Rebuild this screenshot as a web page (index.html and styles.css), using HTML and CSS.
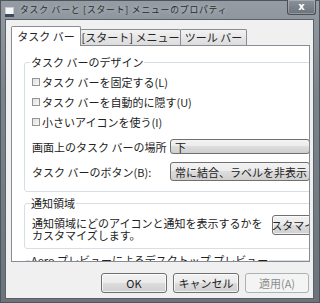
FILE: index.html
```html
<!DOCTYPE html>
<html lang="ja">
  <head>
    <meta charset="UTF-8" />
    <title>タスク バーと [スタート] メニューのプロパティ</title>
    <link rel="stylesheet" href="styles.css">
  </head>
  <body>
    <div class="window">
      <div class="titlebar">
        <svg class="app-icon" width="9" height="10" viewBox="0 0 9 10">
          <rect x="0.5" y="0.5" width="8" height="9" fill="#f4f6f8" stroke="#c8ccd0" />
          <rect x="0" y="7" width="9" height="3" fill="#3b4a5c" />
        </svg>
        <div class="title">タスク バーと [スタート] メニューのプロパティ</div>
        <div class="close-btn">x</div>
      </div>
      <div class="client">
        <div class="tabs">
          <div class="tab active">タスク バー</div>
          <div class="tab start-tab">[スタート] メニュー</div>
          <div class="tab tool-tab">ツール バー</div>
        </div>
        <div class="panel">
          <fieldset class="group design">
            <legend>タスク バーのデザイン</legend>
            <div class="check-row"><span class="checkbox"></span>タスク バーを固定する(L)</div>
            <div class="check-row"><span class="checkbox"></span>タスク バーを自動的に隠す(U)</div>
            <div class="check-row"><span class="checkbox"></span>小さいアイコンを使う(I)</div>
            <div class="field-row first">
              <span class="field-label">画面上のタスク バーの場所</span>
              <div class="dropdown">下</div>
            </div>
            <div class="field-row second">
              <span class="field-label">タスク バーのボタン(B):</span>
              <div class="dropdown">常に結合、ラベルを非表示</div>
            </div>
          </fieldset>
          <fieldset class="group notify">
            <legend>通知領域</legend>
            <div class="notify-row">
              <div class="notify-text">通知領域にどのアイコンと通知を表示するかを<br>カスタマイズします。</div>
              <div class="btn customize-btn"><span>カスタマイズ(C)...</span></div>
            </div>
          </fieldset>
          <fieldset class="group aero">
            <legend>Aero プレビューによるデスクトップ プレビュー</legend>
          </fieldset>
        </div>
        <div class="btn-group">
          <div class="btn">OK</div>
          <div class="btn">キャンセル</div>
          <div class="btn disabled">適用(A)</div>
        </div>
      </div>
    </div>
  </body>
</html>
```

FILE: styles.css
```css
* {
  margin: 0;
  padding: 0;
  box-sizing: border-box;
}
body {
  font-family: "Noto Sans CJK JP", "Noto Sans", sans-serif;
  font-size: 11px;
  color: #222;
  background: #6d747c;
}
.window {
  width: 320px;
  height: 303px;
  display: flex;
  flex-direction: column;
  overflow: hidden;
  background: linear-gradient(#959ca4, #7b838b 30%, #6b737b);
  box-shadow: inset 0 0 0 1px #4d545b;
}
.titlebar {
  height: 20px;
  display: flex;
  align-items: flex-start;
  flex-shrink: 0;
}
.app-icon {
  margin: 7px 0 0 5px;
}
.title {
  margin: 4px 0 0 6px;
  font-size: 8.8px;
  letter-spacing: 0.8px;
  line-height: 12px;
  color: #2b2b2b;
  white-space: nowrap;
  text-shadow: 0 0 5px rgba(255, 255, 255, 0.6);
}
.close-btn {
  margin-left: auto;
  margin-right: 4px;
  width: 29px;
  height: 15px;
  border: 1px solid #4a5058;
  border-top: none;
  border-radius: 0 0 3px 3px;
  background: linear-gradient(#8a9199, #6c737b);
  box-shadow: inset 0 0 0 1px rgba(255, 255, 255, 0.25);
  color: #fff;
  font-family: "DejaVu Sans", sans-serif;
  font-weight: bold;
  font-size: 10px;
  line-height: 13px;
  text-align: center;
}
.client {
  flex: 1;
  margin: 0 7px 5px 6px;
  background-color: #f0f0f0;
  box-shadow: 0 0 0 1px #5a6169;
  padding: 6px 3px 0 5px;
  display: flex;
  flex-direction: column;
}
.tabs {
  display: flex;
  align-items: flex-end;
  height: 19px;
  flex-shrink: 0;
}
.tab {
  height: 16px;
  line-height: 15px;
  margin-right: -1px;
  border: 1px solid #898c95;
  border-bottom: none;
  border-radius: 2px 2px 0 0;
  background: linear-gradient(#f3f3f3, #e6e6e6 50%, #dcdcdc);
  white-space: nowrap;
  text-align: center;
  overflow: hidden;
}
.tab.active {
  width: 70px;
  height: 20px;
  line-height: 18px;
  margin-bottom: -1px;
  background: #fff;
  position: relative;
  z-index: 1;
}
.start-tab {
  width: 101px;
}
.tool-tab {
  width: 67px;
}
.panel {
  height: 217px;
  border: 1px solid #898c95;
  background-color: #fff;
  overflow: hidden;
  flex-shrink: 0;
}
.group {
  margin-left: 12px;
  width: 300px;
  border: 1px solid #d5dfe5;
  border-radius: 3px;
  padding: 0 0 0 5px;
}
.group legend {
  padding: 0 1px;
  line-height: 14px;
  white-space: nowrap;
}
.design {
  margin-top: 9px;
  padding-bottom: 10px;
}
.check-row {
  height: 20px;
  margin-left: 2px;
  display: flex;
  align-items: center;
}
.design legend + .check-row {
  margin-top: 3px;
}
.checkbox {
  width: 8px;
  height: 8px;
  margin-right: 2px;
  border: 1px solid #949494;
  background: linear-gradient(135deg, #e0e0e0, #f8f8f8);
}
.field-row {
  margin-left: 2px;
  display: flex;
  align-items: center;
}
.field-row.first {
  margin-top: 7px;
  height: 15px;
}
.field-row.second {
  margin-top: 8px;
  height: 19px;
}
.field-label {
  width: 138px;
  white-space: nowrap;
}
.dropdown {
  width: 140px;
  height: 100%;
  padding-left: 4px;
  border: 1px solid #707070;
  border-radius: 3px;
  background: linear-gradient(#f3f3f3, #ebebeb 50%, #dddddd 50%, #cfcfcf);
  display: flex;
  align-items: center;
  white-space: nowrap;
}
.notify {
  margin-top: 4px;
  padding-bottom: 7px;
}
.notify-row {
  margin-top: 5px;
  margin-left: 2px;
  display: flex;
  align-items: flex-start;
}
.notify-text {
  width: 234px;
  line-height: 12px;
  margin-top: 2px;
  white-space: nowrap;
}
.customize-btn {
  width: 68px;
  height: 20px;
  flex-shrink: 0;
  overflow: hidden;
}
.aero {
  margin-top: 4px;
  height: 20px;
}
.btn-group {
  margin-top: 11px;
  display: flex;
  justify-content: flex-end;
  padding-right: 1px;
}
.btn {
  width: 66px;
  height: 20px;
  margin-left: 6px;
  border: 1px solid #707070;
  border-radius: 3px;
  background: linear-gradient(#f2f2f2, #ebebeb 50%, #dddddd 50%, #cfcfcf);
  box-shadow: inset 0 0 0 1px rgba(255, 255, 255, 0.7);
  display: flex;
  align-items: center;
  justify-content: center;
  white-space: nowrap;
}
.btn-group .btn:last-child {
  width: 64px;
}
.btn.disabled {
  color: #8d8d8d;
  border-color: #adb2b5;
  background: #f4f4f4;
  box-shadow: none;
}
```
